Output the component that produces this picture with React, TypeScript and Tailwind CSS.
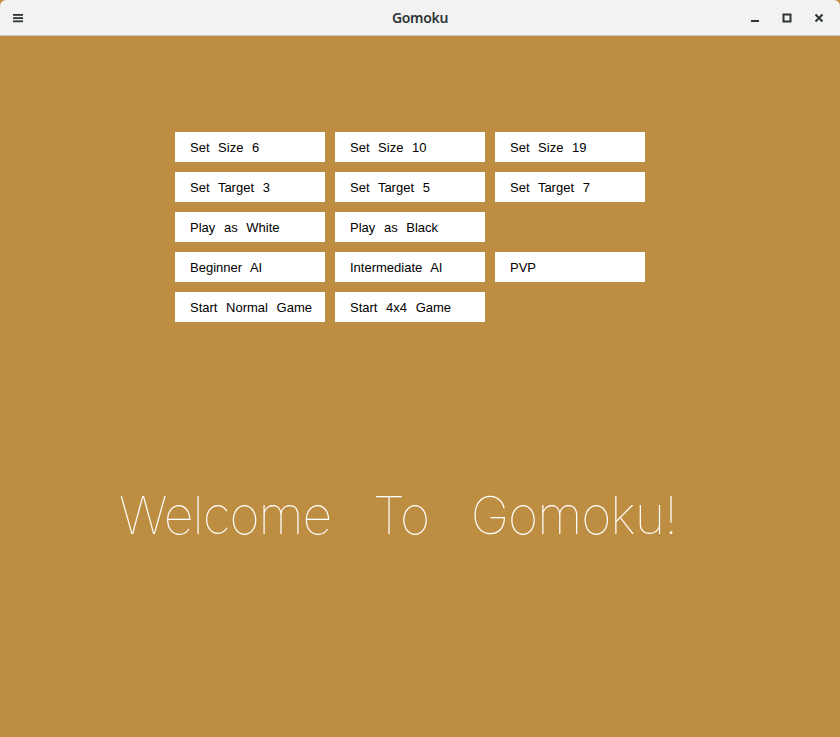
const rows: (string | null)[][] = [
  ["Set Size 6", "Set Size 10", "Set Size 19"],
  ["Set Target 3", "Set Target 5", "Set Target 7"],
  ["Play as White", "Play as Black", null],
  ["Beginner AI", "Intermediate AI", "PVP"],
  ["Start Normal Game", "Start 4x4 Game", null],
];

function TitleBar() {
  return (
    <div className="h-[36px] bg-[#f2f2f2] border-b border-[#c8c8c8] rounded-t-[6px] grid grid-cols-[1fr_auto_1fr] items-center px-[12px] text-[#2e3436]">
      <svg width="12" height="12" viewBox="0 0 12 12" className="shrink-0">
        <rect x="1" y="2" width="10" height="1.8" fill="#2e3436" />
        <rect x="1" y="5.2" width="10" height="1.8" fill="#2e3436" />
        <rect x="1" y="8.4" width="10" height="1.8" fill="#2e3436" />
      </svg>
      <div className="text-center text-[14px] font-semibold font-['Noto_Sans',sans-serif] tracking-[-0.3px]">Gomoku</div>
      <div className="flex items-center justify-end gap-[22px] pr-[4px]">
        <svg width="10" height="10" viewBox="0 0 10 10">
          <rect x="1" y="7" width="8" height="2" fill="#2e3436" />
        </svg>
        <svg width="10" height="10" viewBox="0 0 10 10">
          <rect x="1.5" y="1.5" width="7" height="7" fill="none" stroke="#2e3436" strokeWidth="2" />
        </svg>
        <svg width="10" height="10" viewBox="0 0 10 10">
          <path d="M1.5 1.5 L8.5 8.5 M8.5 1.5 L1.5 8.5" stroke="#2e3436" strokeWidth="2" />
        </svg>
      </div>
    </div>
  );
}

export default function App() {
  return (
    <div className="w-[840px] h-[737px] bg-[#bd8e41] flex flex-col overflow-hidden">
      <TitleBar />
      <div className="pt-[96px] pl-[175px] flex flex-col gap-[10px]">
        {rows.map((row, i) => (
          <div key={i} className="flex gap-[10px]">
            {row.map((label, j) =>
              label ? (
                <div
                  key={j}
                  className="w-[150px] h-[30px] bg-white flex items-center pl-[15px] pt-[1px] text-[13px] text-black font-['Liberation_Sans',sans-serif] [word-spacing:5px]"
                >
                  {label}
                </div>
              ) : (
                <div key={j} className="w-[150px] h-[30px]" />
              )
            )}
          </div>
        ))}
      </div>
      <div className="pt-[168px] pl-[119px] text-white text-[52px] leading-none font-thin font-['Inter',sans-serif] tracking-[-1px] [word-spacing:28px]">
        Welcome To Gomoku!
      </div>
    </div>
  );
}
